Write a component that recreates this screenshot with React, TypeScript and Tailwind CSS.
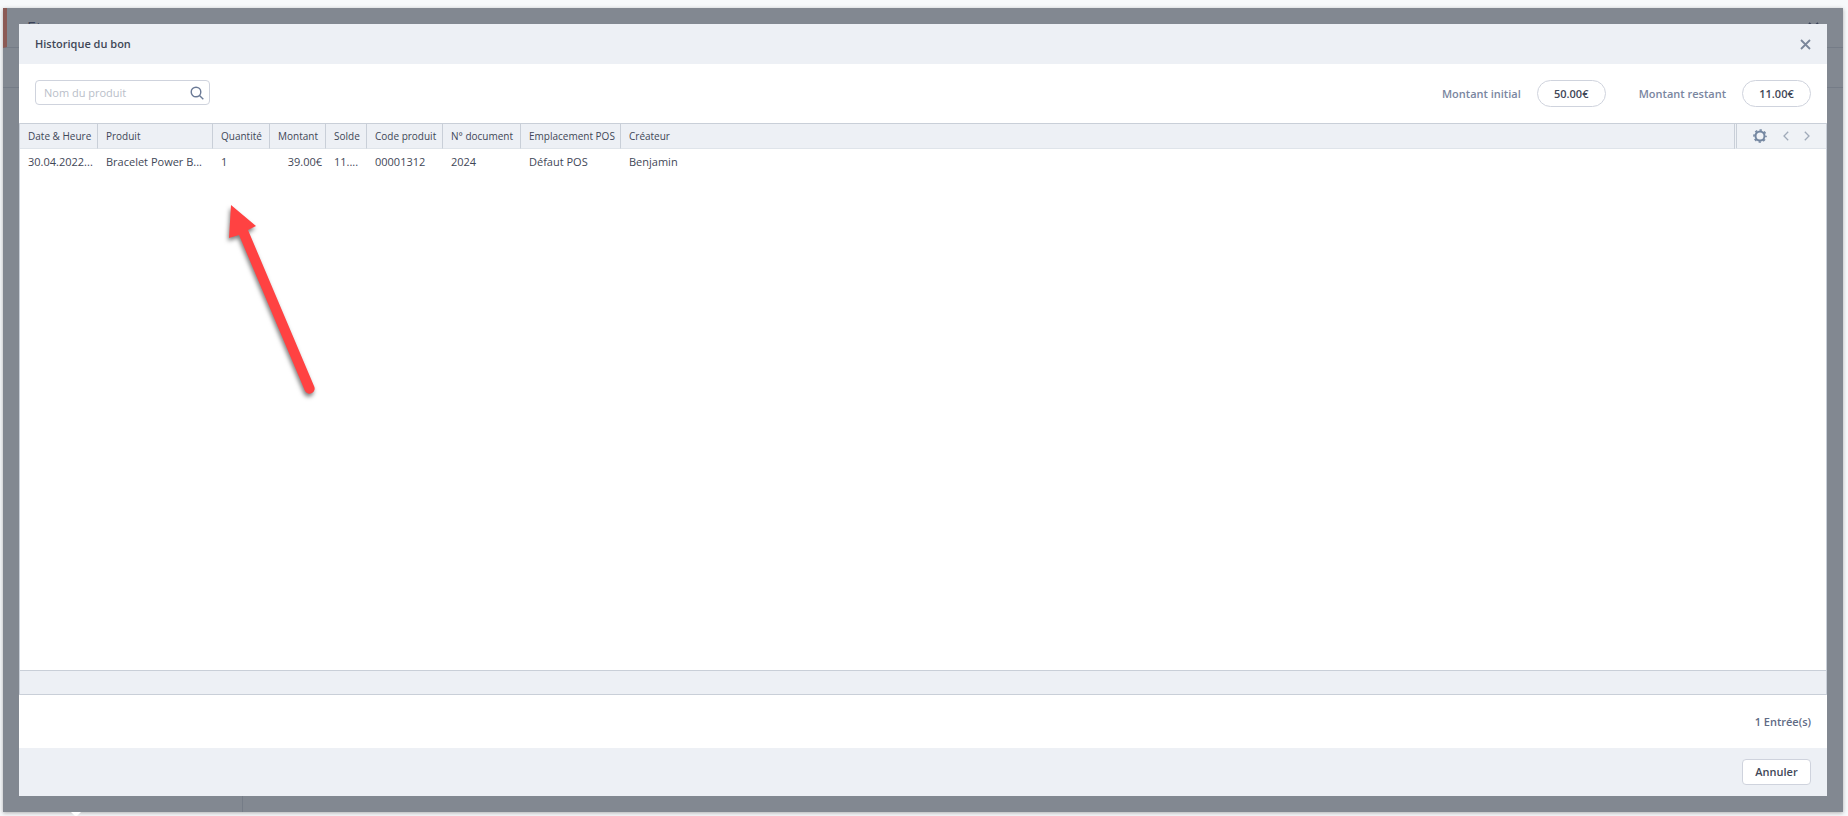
import { useState } from "react";

interface Entry {
    date: string;
    product: string;
    quantity: number;
    amount: string;
    balance: string;
    code: string;
    document: string;
    location: string;
    creator: string;
}

const entries: Entry[] = [
    {
        date: "30.04.2022...",
        product: "Bracelet Power B...",
        quantity: 1,
        amount: "39.00€",
        balance: "11....",
        code: "00001312",
        document: "2024",
        location: "Défaut POS",
        creator: "Benjamin"
    }
];

const columns = [
    { label: "Date & Heure", width: "w-[78px]" },
    { label: "Produit", width: "w-[115px]" },
    { label: "Quantité", width: "w-[57px]" },
    { label: "Montant", width: "w-[56px]" },
    { label: "Solde", width: "w-[41px]" },
    { label: "Code produit", width: "w-[76px]" },
    { label: "N° document", width: "w-[78px]" },
    { label: "Emplacement POS", width: "w-[100px]" }
];

function CloseIcon() {
    return (
        <svg width="11" height="11" viewBox="0 0 11 11" fill="none" stroke="currentColor" strokeWidth="1.8">
            <path d="M1 1l9 9M10 1l-9 9" />
        </svg>
    );
}

function SearchIcon() {
    return (
        <svg width="14" height="14" viewBox="0 0 14 14" fill="none" stroke="currentColor" strokeWidth="1.4">
            <circle cx="6" cy="6" r="4.8" />
            <path d="M9.5 9.5L13.3 13.3" />
        </svg>
    );
}

function GearIcon() {
    return (
        <svg width="14" height="14" viewBox="0 0 14 14" fill="none" stroke="currentColor">
            <circle cx="7" cy="7" r="4.5" strokeWidth="2" />
            <circle cx="7" cy="7" r="6" strokeWidth="1.6" strokeDasharray="2.356 2.356" strokeDashoffset="1.178" />
        </svg>
    );
}

function ChevronIcon({ flip }: { flip?: boolean }) {
    return (
        <svg width="6" height="10" viewBox="0 0 6 10" fill="none" stroke="currentColor" strokeWidth="1.3">
            <path d={flip ? "M0.8 0.8L5 5L0.8 9.2" : "M5.2 0.8L1 5L5.2 9.2"} />
        </svg>
    );
}

function Amount({ label, value }: { label: string; value: string }) {
    return (
        <div className="flex items-center gap-4">
            <span className="font-semibold text-[#7a869f]">{label}</span>
            <span className="flex h-[27px] w-[69px] items-center justify-center rounded-full border border-[#cfd3dd] font-semibold text-[#3f4757]">
                {value}
            </span>
        </div>
    );
}

// Red pointer drawn over the grid
function Arrow() {
    return (
        <svg
            className="pointer-events-none absolute top-[170px] left-[200px] drop-shadow-[-1px_3px_2px_rgba(0,0,0,0.5)]"
            width="110"
            height="210"
            viewBox="0 0 110 210"
            fill="#ff4242"
        >
            <path d="M12 11L37 32L29 36L95 192A5 5 0 0 1 86 197L20 41L10 44Z" />
        </svg>
    );
}

function HistoryDialog() {
    const [search, setSearch] = useState("");

    return (
        <section
            role="dialog"
            aria-labelledby="dialog-title"
            className="absolute inset-4 flex flex-col bg-white text-[11px] leading-4 text-[#3f4757]"
        >
            <header className="flex h-10 items-center justify-between bg-[#edf0f5] px-4">
                <h1 id="dialog-title" className="font-semibold">Historique du bon</h1>
                <button aria-label="Fermer" className="text-[#7a869a]">
                    <CloseIcon />
                </button>
            </header>

            <div className="flex items-start justify-between px-4 py-4">
                <div className="flex h-[25px] w-[175px] items-center rounded border border-[#cfd3dd] pr-1 pl-2 focus-within:border-[#7a869a]">
                    <input
                        type="text"
                        aria-label="Nom du produit"
                        placeholder="Nom du produit"
                        value={search}
                        onChange={(e) => setSearch(e.target.value)}
                        className="min-w-0 flex-1 outline-none placeholder:text-[#b9bec9]"
                    />
                    <button aria-label="Rechercher" className="px-px text-[#6b7a96]">
                        <SearchIcon />
                    </button>
                </div>
                <div className="flex gap-[33px]">
                    <Amount label="Montant initial" value="50.00€" />
                    <Amount label="Montant restant" value="11.00€" />
                </div>
            </div>

            <div className="flex flex-1 flex-col border border-[#c9cfd8]">
                <table className="w-full table-fixed border-separate border-spacing-0">
                    <thead className="bg-[#edf0f5]">
                        <tr className="h-[25px] text-left text-[10px]">
                            {columns.map((col) => (
                                <th key={col.label} className={`${col.width} border-r border-b border-r-[#c9cfd8] border-b-[#dfe4ea] px-2 py-0 font-medium whitespace-nowrap`}>
                                    {col.label}
                                </th>
                            ))}
                            <th className="border-b border-[#dfe4ea] px-2 py-0 font-medium">Créateur</th>
                            <th className="w-[92px] border-b border-l-3 border-b-[#dfe4ea] border-l-[#c9cfd8] bg-[#eff2f6] px-4 py-0 [border-left-style:double]">
                                <div className="flex items-center justify-between">
                                    <button aria-label="Colonnes" className="text-[#7386a0]">
                                        <GearIcon />
                                    </button>
                                    <button aria-label="Page précédente" className="text-[#a0aab9]">
                                        <ChevronIcon />
                                    </button>
                                    <button aria-label="Page suivante" className="text-[#a0aab9]">
                                        <ChevronIcon flip />
                                    </button>
                                </div>
                            </th>
                        </tr>
                    </thead>
                    <tbody>
                        {entries.map((entry) => (
                            <tr key={entry.code} className="h-[26px] whitespace-nowrap">
                                <td className="px-2 py-0">{entry.date}</td>
                                <td className="px-2 py-0">{entry.product}</td>
                                <td className="px-2 py-0">{entry.quantity}</td>
                                <td className="px-1 py-0 text-right">{entry.amount}</td>
                                <td className="px-2 py-0">{entry.balance}</td>
                                <td className="px-2 py-0">{entry.code}</td>
                                <td className="px-2 py-0">{entry.document}</td>
                                <td className="px-2 py-0">{entry.location}</td>
                                <td className="px-2 py-0">{entry.creator}</td>
                                <td />
                            </tr>
                        ))}
                    </tbody>
                </table>
                <div className="mt-auto h-6 border-t border-[#c9cfd8] bg-[#edf0f5]" />
            </div>

            <div className="flex h-[53px] items-center justify-end px-4 font-semibold text-[#5f6b85]">
                1 Entrée(s)
            </div>

            <footer className="flex h-12 items-center justify-end bg-[#edf0f5] px-4">
                <button className="h-[26px] w-[69px] rounded border border-[#cfd3dd] bg-white font-semibold">
                    Annuler
                </button>
            </footer>

            <Arrow />
        </section>
    );
}

export default function App() {
    return (
        <div className="flex min-h-screen flex-col bg-[#f7f9fb] pt-2 pr-[5px] pb-1 pl-[3px] font-['Open_Sans',sans-serif]">
            <div className="relative flex flex-1 flex-col bg-[#828891] shadow-[0_1px_4px_rgba(0,0,0,0.3)]">
                <div className="flex h-10 items-center justify-between border-b border-l-4 border-b-[#757c87] border-l-[#8b5a55] px-5 pr-6 text-base text-[#3a4258]">
                    <span>Et</span>
                    <CloseIcon />
                </div>
                <div className="h-10 border-b border-[#757c87]" />
                <div className="w-60 flex-1 border-r border-[#757c87]" />
                <HistoryDialog />
            </div>
            <svg className="absolute bottom-0 left-[71px]" width="10" height="4" viewBox="0 0 10 4" fill="#ffffff">
                <path d="M0 0H10L5 5Z" />
            </svg>
        </div>
    );
}
